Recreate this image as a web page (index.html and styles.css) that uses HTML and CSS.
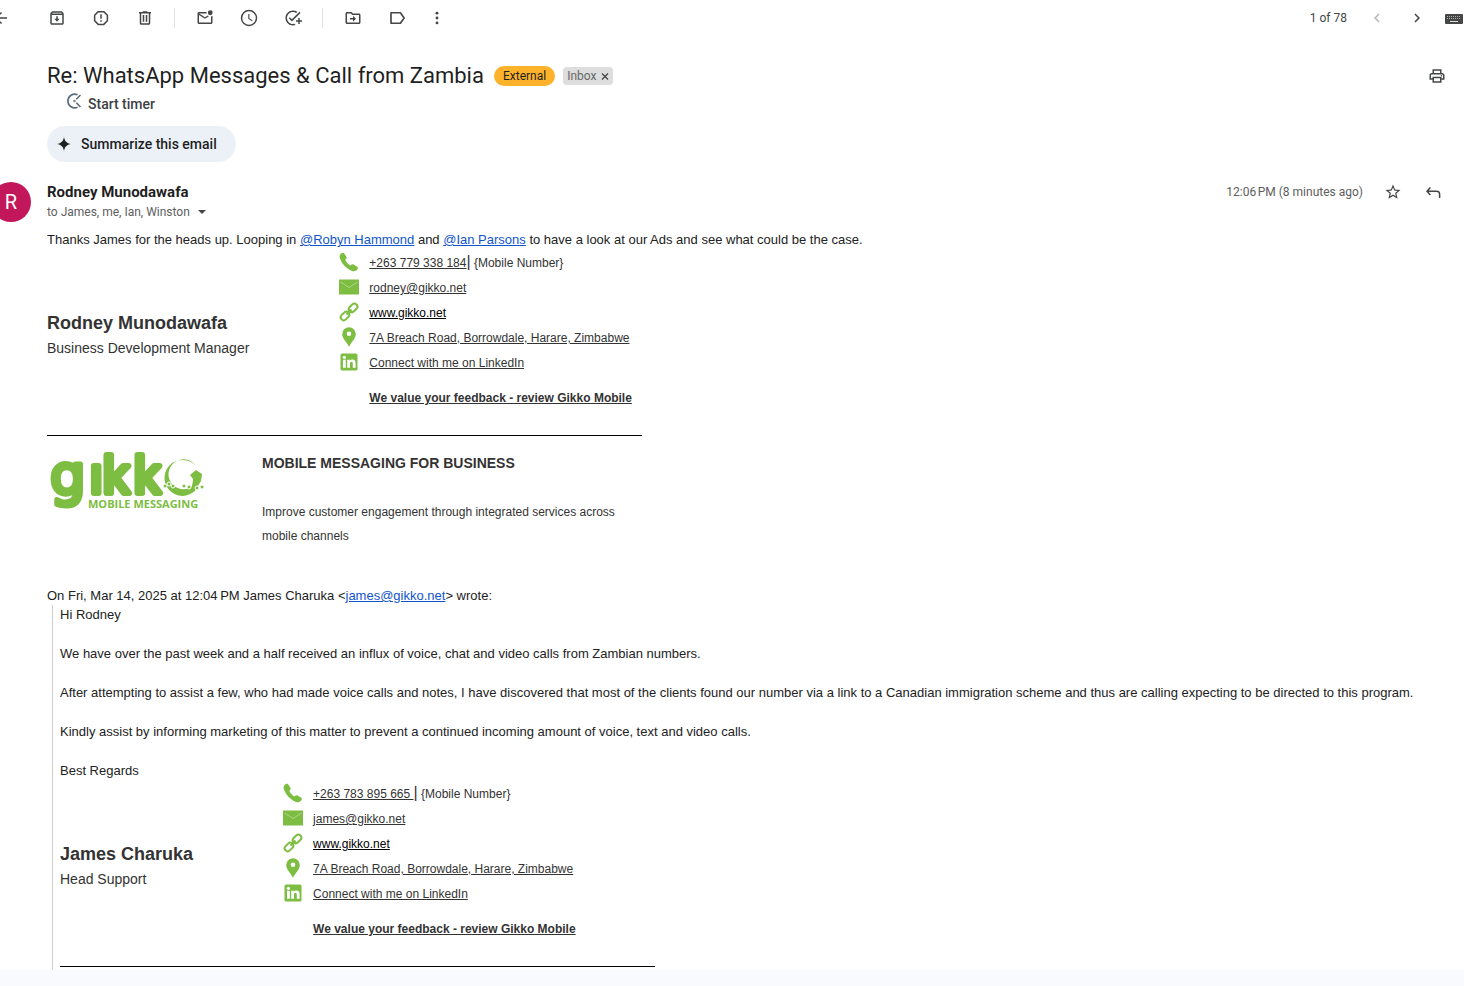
FILE: index.html
```html
<!DOCTYPE html>
<html lang="en">
<head>
<meta charset="utf-8">
<title>Re: WhatsApp Messages &amp; Call from Zambia</title>
<link rel="stylesheet" href="styles.css">
</head>
<body>
<svg class="defs" aria-hidden="true">
  <symbol id="i-phone" viewBox="0 0 20 20"><path d="M1.2 2.600C2.500.9 4.400.2 5.300 1.500L7.500 5c.5 1 .1 1.800-1.200 2.800.8 2.300 3 4.700 5.300 5.800 1-1.300 2-1.700 3-1.100l3.700 2.300c1.200.9.500 2.500-1.100 3.800-1.200 1-3 .9-4.800.1C7.300 16.600 2.700 11.500 1 6.500.5 5 .4 3.700 1.200 2.600z"/></symbol>
  <symbol id="i-mail" viewBox="0 0 20 20"><path d="M0 2.500h20v15H0z"/><path d="M1.500 5l8.500 5.500L18.500 5" fill="none" stroke="#b9dda0" stroke-width=".8"/></symbol>
  <symbol id="i-link" viewBox="0 0 20 20"><g fill="none" stroke="#7dbd42" stroke-width="2"><rect x="9.300" y="3" width="9.600" height="6" rx="3" transform="rotate(-45 14 6)"/><rect x="1.200" y="11" width="9.600" height="6" rx="3" transform="rotate(-45 6 14)"/><path d="M7.500 12.500l5-5"/></g></symbol>
  <symbol id="i-pin" viewBox="0 0 20 20"><path fill-rule="evenodd" d="M10 .3a6.800 6.800 0 0 0-6.800 6.800c0 4.500 4.300 7.900 6.800 12.700 2.500-4.800 6.800-8.200 6.800-12.700A6.800 6.800 0 0 0 10 .3zm0 4.200a2.300 2.300 0 1 1 0 4.600 2.300 2.300 0 0 1 0-4.600z"/></symbol>
  <symbol id="i-linkedin" viewBox="0 0 20 20"><rect x="1.500" y="1.500" width="17" height="17" rx="1.500"/><g fill="#fff"><circle cx="5.400" cy="5.300" r="1.600"/><path d="M4 7.800h2.800v8H4zM8.200 7.800h2.600v1.100c.5-.8 1.400-1.300 2.600-1.300 2.300 0 3.200 1.500 3.200 3.700v4.500h-2.800v-4c0-1.200-.3-2-1.300-2-1.200 0-1.500.9-1.500 2v4H8.200z"/></g></symbol>
</svg>

<nav class="toolbar" aria-label="Message actions">
  <button class="tool tool-back" aria-label="Back"><svg viewBox="0 0 24 24"><path d="M20 11H7.830l5.590-5.590L12 4l-8 8 8 8 1.410-1.410L7.830 13H20v-2z"/></svg></button>
  <button class="tool" aria-label="Archive"><svg viewBox="0 0 24 24"><path d="M20.540 5.230l-1.390-1.680C18.880 3.210 18.470 3 18 3H6c-.47 0-.88.210-1.160.550L3.460 5.230C3.170 5.570 3 6.020 3 6.500V19c0 1.100.9 2 2 2h14c1.100 0 2-.9 2-2V6.500c0-.48-.17-.93-.46-1.270zM6.240 5h11.520l.83 1H5.420l.82-1zM5 19V8h14v11H5z"/><path d="M11 9.500h2V13h2.500L12 17l-3.500-4H11z"/></svg></button>
  <button class="tool" aria-label="Report spam"><svg viewBox="0 0 24 24"><path d="M8.300 3.500h7.400L20.500 8.300v7.400l-4.800 4.800H8.300l-4.800-4.800V8.300z" fill="none" stroke="currentColor" stroke-width="2" stroke-linejoin="round"/><path d="M11 7h2v6h-2zM11 15h2v2h-2z"/></svg></button>
  <button class="tool" aria-label="Delete"><svg viewBox="0 0 24 24"><path d="M15 4V3H9v1H4v2h1v13c0 1.100.9 2 2 2h10c1.100 0 2-.9 2-2V6h1V4h-5zm2 15H7V6h10v13zM9 8h2v9H9zm4 0h2v9h-2z"/></svg></button>
  <span class="divider"></span>
  <button class="tool" aria-label="Mark as unread"><svg viewBox="0 0 24 24"><path d="M22 8.980V18c0 1.100-.9 2-2 2H4c-1.100 0-2-.9-2-2V6c0-1.100.9-2 2-2h10.100a5 5 0 0 0 0 2H4l8 5 3.670-2.290c.47.430 1.020.760 1.630.980L12 13 4 8v10h16V9.900c.74-.15 1.420-.48 2-.92z"/><circle cx="19" cy="5" r="3.200"/></svg></button>
  <button class="tool" aria-label="Snooze"><svg viewBox="0 0 24 24"><circle cx="12" cy="12" r="10" fill="none" stroke="currentColor" stroke-width="2"/><path d="M12.500 6.500H11v6.500l5 3.400.8-1.300-4.300-2.800z"/></svg></button>
  <button class="tool" aria-label="Add to Tasks"><svg viewBox="0 0 24 24"><path d="M22 5.180L10.590 16.600l-4.240-4.240 1.410-1.410 2.830 2.830 10-10L22 5.180zM12 20c-4.410 0-8-3.590-8-8s3.590-8 8-8c1.570 0 3.040.46 4.280 1.250l1.450-1.450A10.020 10.020 0 0 0 12 2C6.480 2 2 6.480 2 12s4.480 10 10 10c1.200 0 2.340-.21 3.400-.6l-1.500-1.600c-.6.100-1.200.200-1.900.200zm7-5h-3v2h3v3h2v-3h3v-2h-3v-3h-2v3z"/></svg></button>
  <span class="divider"></span>
  <button class="tool" aria-label="Move to"><svg viewBox="0 0 24 24"><path d="M20 6h-8l-2-2H4c-1.100 0-2 .9-2 2v12c0 1.100.9 2 2 2h16c1.100 0 2-.9 2-2V8c0-1.100-.9-2-2-2zm0 12H4V6h5.170l2 2H20v10zm-8-1l4-4-4-4v3H8v2h4z"/></svg></button>
  <button class="tool" aria-label="Labels"><svg viewBox="0 0 24 24"><path d="M16.500 5H4v14h12.500L21.500 12z" fill="none" stroke="currentColor" stroke-width="2.200" stroke-linejoin="round"/></svg></button>
  <button class="tool tool-more" aria-label="More"><svg viewBox="0 0 24 24"><circle cx="12" cy="5.500" r="1.900"/><circle cx="12" cy="12" r="1.900"/><circle cx="12" cy="18.500" r="1.900"/></svg></button>
  <span class="pager">1 of 78</span>
  <button class="tool tool-page" aria-label="Newer" disabled><svg viewBox="0 0 24 24"><path d="M15.410 7.410L14 6l-6 6 6 6 1.410-1.410L10.830 12z"/></svg></button>
  <button class="tool tool-page" aria-label="Older"><svg viewBox="0 0 24 24"><path d="M8.590 16.590L13.170 12 8.590 7.410 10 6l6 6-6 6z"/></svg></button>
  <button class="tool tool-keys" aria-label="Input tools"><svg viewBox="0 0 18 12"><rect y="2" width="18" height="10" rx="1"/><path d="M2 4.500h14M2 6.500h14" stroke="#aaa" stroke-dasharray="1 1"/><path d="M5 9.500h8" stroke="#ddd"/></svg></button>
</nav>

<main class="thread">
  <header class="subject">
    <h1>Re: WhatsApp Messages &amp; Call from Zambia</h1>
    <span class="tag tag-external">External</span>
    <span class="tag tag-inbox">Inbox <button class="tag-x" aria-label="Remove Inbox label"><svg viewBox="0 0 8 8"><path d="M1 1.500l6 6M7 1.500l-6 6" fill="none" stroke="currentColor" stroke-width="1.300"/></svg></button></span>
    <button class="print" aria-label="Print all"><svg viewBox="0 0 24 24"><path d="M19 8h-1V3H6v5H5c-1.660 0-3 1.340-3 3v6h4v4h12v-4h4v-6c0-1.660-1.340-3-3-3zM8 5h8v3H8V5zm8 14H8v-4h8v4zm2-4v-2H6v2H4v-4c0-.55.45-1 1-1h14c.55 0 1 .45 1 1v4h-2z"/><circle cx="18" cy="11.500" r="1"/></svg></button>
  </header>
  <button class="timer"><svg viewBox="0 0 16 16"><path d="M11.500 1.800A6.800 6.800 0 1 0 11.500 14.200M10.300 6.200L14.500 2M10.300 9.800l4.200 4.200"/><circle cx="8.500" cy="8" r=".4"/></svg>Start timer</button>
  <button class="summarize"><svg viewBox="0 0 14 14"><path d="M7 0c.7 4.300 2.700 6.300 7 7-4.300.7-6.300 2.700-7 7-.7-4.300-2.700-6.300-7-7 4.300-.7 6.300-2.700 7-7z"/></svg>Summarize this email</button>

  <article class="message">
    <div class="avatar">R</div>
    <div class="content">
      <header class="meta">
        <div class="who">
          <h2>Rodney Munodawafa</h2>
          <button class="recipients">to James, me, Ian, Winston <span class="caret"></span></button>
        </div>
        <time class="when">12:06&#8239;PM (8 minutes ago)</time>
        <button class="act" aria-label="Star"><svg viewBox="0 0 24 24"><path d="M22 9.240l-7.190-.62L12 2 9.190 8.630 2 9.240l5.460 4.730L5.820 21 12 17.270 18.180 21l-1.630-7.030L22 9.240zM12 15.400l-3.760 2.270 1-4.280-3.320-2.880 4.380-.38L12 6.100l1.710 4.040 4.380.38-3.320 2.880 1 4.280L12 15.400z"/></svg></button>
        <button class="act" aria-label="Reply"><svg viewBox="0 0 24 24"><path d="M8.500 6L4 11 8.500 16M4.500 11h12.300a4 4 0 0 1 4 4V20" fill="none" stroke="currentColor" stroke-width="2"/></svg></button>
      </header>
      <p class="lead">Thanks James for the heads up. Looping in <a href="#robyn">@Robyn Hammond</a> and <a href="#ian">@Ian Parsons</a> to have a look at our Ads and see what could be the case.</p>

      <section class="signature">
        <div class="person"><strong>Rodney Munodawafa</strong><span>Business Development Manager</span></div>
        <ul class="contacts">
          <li><svg><use href="#i-phone"/></svg><a href="#tel">+263 779 338 184</a><span class="bar">|</span> {Mobile Number}</li>
          <li><svg><use href="#i-mail"/></svg><a href="#mail">rodney@gikko.net</a></li>
          <li><svg><use href="#i-link"/></svg><a class="site" href="#site">www.gikko.net</a></li>
          <li><svg><use href="#i-pin"/></svg><a href="#map">7A Breach Road, Borrowdale, Harare, Zimbabwe</a></li>
          <li><svg><use href="#i-linkedin"/></svg><a href="#linkedin">Connect with me on LinkedIn</a></li>
          <li class="feedback"><a href="#review">We value your feedback - review Gikko Mobile</a></li>
        </ul>
      </section>
      <section class="brand">
        <svg class="logo" viewBox="0 0 160 66" role="img" aria-label="Gikko Mobile Messaging">
          <text class="wordmark wordmark-g" x="3" y="46">g</text>
          <text class="wordmark" x="42 56 87" y="45">ıkk</text>
          <path d="M149 18A18 18 0 1 0 151 39L147 37A15 15 0 1 1 149 18z"/>
          <path d="M143 27l6-5 6 4-1 7-5 8-7 3c3-5 4-9 4-13z"/>
          <g class="crowd"><circle cx="118" cy="38" r="2"/><circle cx="122" cy="36" r="2"/><circle cx="126" cy="38" r="2"/><circle cx="137" cy="38" r="2"/><circle cx="142" cy="39" r="2"/><circle cx="150" cy="40" r="2"/><circle cx="155" cy="39" r="2"/></g>
          <text class="tagline" x="41" y="60">MOBILE MESSAGING</text>
        </svg>
        <div class="pitch">
          <h3>MOBILE MESSAGING FOR BUSINESS</h3>
          <p>Improve customer engagement through integrated services across mobile channels</p>
        </div>
      </section>

      <p class="attribution">On Fri, Mar 14, 2025 at 12:04&#8239;PM James Charuka &lt;<a href="#james">james@gikko.net</a>&gt; wrote:</p>
      <blockquote class="quote">
        <p>Hi Rodney</p>
        <p>We have over the past week and a half received an influx of voice, chat and video calls from Zambian numbers.</p>
        <p>After attempting to assist a few, who had made voice calls and notes, I have discovered that most of the clients found our number via a link to a Canadian immigration scheme and thus are calling expecting to be directed to this program.</p>
        <p>Kindly assist by informing marketing of this matter to prevent a continued incoming amount of voice, text and video calls.</p>
        <p>Best Regards</p>
        <section class="signature">
          <div class="person"><strong>James Charuka</strong><span>Head Support</span></div>
          <ul class="contacts">
            <li><svg><use href="#i-phone"/></svg><a href="#tel2">+263 783 895 665&nbsp;</a><span class="bar">|</span> {Mobile Number}</li>
            <li><svg><use href="#i-mail"/></svg><a href="#mail2">james@gikko.net</a></li>
            <li><svg><use href="#i-link"/></svg><a class="site" href="#site2">www.gikko.net</a></li>
            <li><svg><use href="#i-pin"/></svg><a href="#map2">7A Breach Road, Borrowdale, Harare, Zimbabwe</a></li>
            <li><svg><use href="#i-linkedin"/></svg><a href="#linkedin2">Connect with me on LinkedIn</a></li>
            <li class="feedback"><a href="#review2">We value your feedback - review Gikko Mobile</a></li>
          </ul>
        </section>
      </blockquote>
    </div>
  </article>
</main>
</body>
</html>
```
FILE: styles.css
```css
* { box-sizing: border-box; }
body {
  margin: 0;
  height: 100vh;
  padding-bottom: 16px;
  display: flex;
  flex-direction: column;
  overflow: hidden;
  background: #f8fafd;
  color: #222;
  font: 13px/20px "Liberation Sans", Arial, sans-serif;
}
h1, h2, h3, p, ul, blockquote { margin: 0; padding: 0; }
button {
  border: 0;
  padding: 0;
  background: none;
  color: #444746;
  font: inherit;
  cursor: pointer;
}
svg { display: block; fill: currentColor; flex: none; }
.defs { position: absolute; width: 0; height: 0; }

.toolbar {
  display: flex;
  align-items: center;
  height: 36px;
  flex: none;
  background: #fff;
  overflow: hidden;
}
.tool {
  flex: none;
  width: 44px;
  display: flex;
  justify-content: center;
}
.tool svg, .print svg, .act svg { width: 18px; height: 18px; }
.tool-back { margin: 0 12px 0 -21px; }
.tool-more { width: 36px; }
.tool-page { width: 40px; }
.tool:disabled { color: #b4b5b5; }
.tool-keys { width: 26px; justify-content: flex-end; margin-right: 1px; }
.tool-keys svg { height: 12px; }
.divider { width: 1px; height: 20px; margin: 0 8px 0 7px; background: #e3e3e3; }
.pager {
  margin-left: auto;
  margin-right: 10px;
  color: #444746;
  font: 12px/20px Roboto, sans-serif;
}

.thread {
  flex: 1;
  min-height: 0;
  overflow: hidden;
  padding-top: 24px;
  background: #fff;
  display: flex;
  flex-direction: column;
  align-items: flex-start;
}
.subject {
  align-self: stretch;
  flex: none;
  display: flex;
  align-items: center;
  height: 32px;
  padding: 0 18px 0 47px;
}
h1 {
  margin-right: 10px;
  color: #1f1f1f;
  font: 400 22px/32px Roboto, sans-serif;
}
.tag { font: 12px/20px Roboto, sans-serif; display: flex; align-items: center; }
.tag-external {
  height: 20px;
  margin-right: 8px;
  padding: 0 9px;
  border-radius: 10px;
  background: #fdb22b;
  color: #1f1f1f;
}
.tag-inbox {
  height: 18px;
  gap: 5px;
  padding: 0 4px;
  border-radius: 4px;
  background: #ddd;
  color: #666;
}
.tag-x svg { width: 8px; height: 8px; }
.print { margin-left: auto; }
.timer {
  flex: none;
  display: flex;
  gap: 6px;
  height: 24px;
  margin-left: 66px;
  color: #3c4043;
  font: 500 14px/24px Roboto, sans-serif;
}
.timer svg {
  width: 16px;
  height: 16px;
  margin-top: 1px;
  fill: none;
  stroke: #5a6b7b;
  stroke-width: 1.6px;
}
.summarize {
  flex: none;
  display: flex;
  align-items: center;
  gap: 10px;
  height: 36px;
  margin: 10px 0 20px 47px;
  padding: 0 19px 0 10px;
  border-radius: 18px;
  background: #ecf1f8;
  color: #1f1f1f;
  font: 500 14px/20px Roboto, sans-serif;
}
.summarize svg { width: 14px; height: 14px; }

.message { align-self: stretch; display: flex; gap: 16px; flex: 1 0 auto; }
.avatar {
  flex: none;
  width: 40px;
  height: 40px;
  margin-left: -9px;
  border-radius: 50%;
  background: #c2185b;
  color: #fff;
  font: 20px/40px Roboto, sans-serif;
  text-align: center;
}
.content { flex: 1; min-width: 0; display: flex; flex-direction: column; }
.meta { display: flex; height: 48px; padding-right: 21px; }
.who { margin-right: auto; }
h2 { color: #1f1f1f; font: 700 15px/20px Roboto, sans-serif; }
.recipients {
  display: flex;
  align-items: center;
  gap: 8px;
  color: #5e5e5e;
  font: 12px/20px Roboto, sans-serif;
}
.caret { border: 4px solid transparent; border-top-color: #444746; border-bottom: 0; }
.when { margin-right: 12px; color: #5e5e5e; font: 12px/20px Roboto, sans-serif; }
.act { width: 36px; height: 20px; display: flex; align-items: center; justify-content: center; }
.act + .act { margin-left: 4px; margin-right: -8px; }

.lead a, .attribution a { color: #15c; }
.lead { height: 20px; }
.attribution { line-height: 19px; }
.signature {
  display: flex;
  gap: 90px;
  width: 595px;
  max-width: 100%;
  padding-bottom: 25px;
  border-bottom: 1px solid #000;
  color: #333;
  font-size: 12px;
}
.signature a { color: inherit; }
.signature a.site { color: #000; }
.person {
  display: flex;
  flex-direction: column;
  justify-content: center;
  padding-top: 12px;
  font-size: 14px;
  line-height: 25px;
}
.person strong { font-size: 18px; }
.contacts { list-style: none; line-height: 27px; }
.contacts li { display: flex; height: 25px; white-space: pre; }
.contacts svg { width: 20px; height: 20px; margin: 2px 10px 0 0; color: #7dbd42; }
.bar { font-size: 16px; line-height: 24px; }
.contacts .feedback { margin: 10px 0 0 30px; font-weight: 700; }

.brand { display: flex; gap: 55px; height: 150px; padding-top: 12px; }
.logo { width: 160px; height: 66px; color: #7dbd42; overflow: visible; }
.wordmark {
  font: 52px "Liberation Sans", sans-serif;
  stroke: #7dbd42;
  stroke-width: 6px;
  stroke-linejoin: round;
}
.wordmark-g { font: 56px "DejaVu Sans", sans-serif; stroke-width: 5px; }
.crowd { stroke: #fff; stroke-width: 1px; }
.tagline { font: 700 11px "Open Sans", sans-serif; }
.pitch { width: 370px; color: #333; font-size: 12px; line-height: 24px; }
h3 { margin: 3px 0 25px; font-size: 14px; line-height: 24px; }
.quote {
  flex: 1;
  margin-left: 5px;
  padding-left: 7px;
  border-left: 1px solid #ccc;
}
.quote p { margin-bottom: 20px; line-height: 19px; }
.quote p:last-of-type { margin-bottom: 1px; }
```
